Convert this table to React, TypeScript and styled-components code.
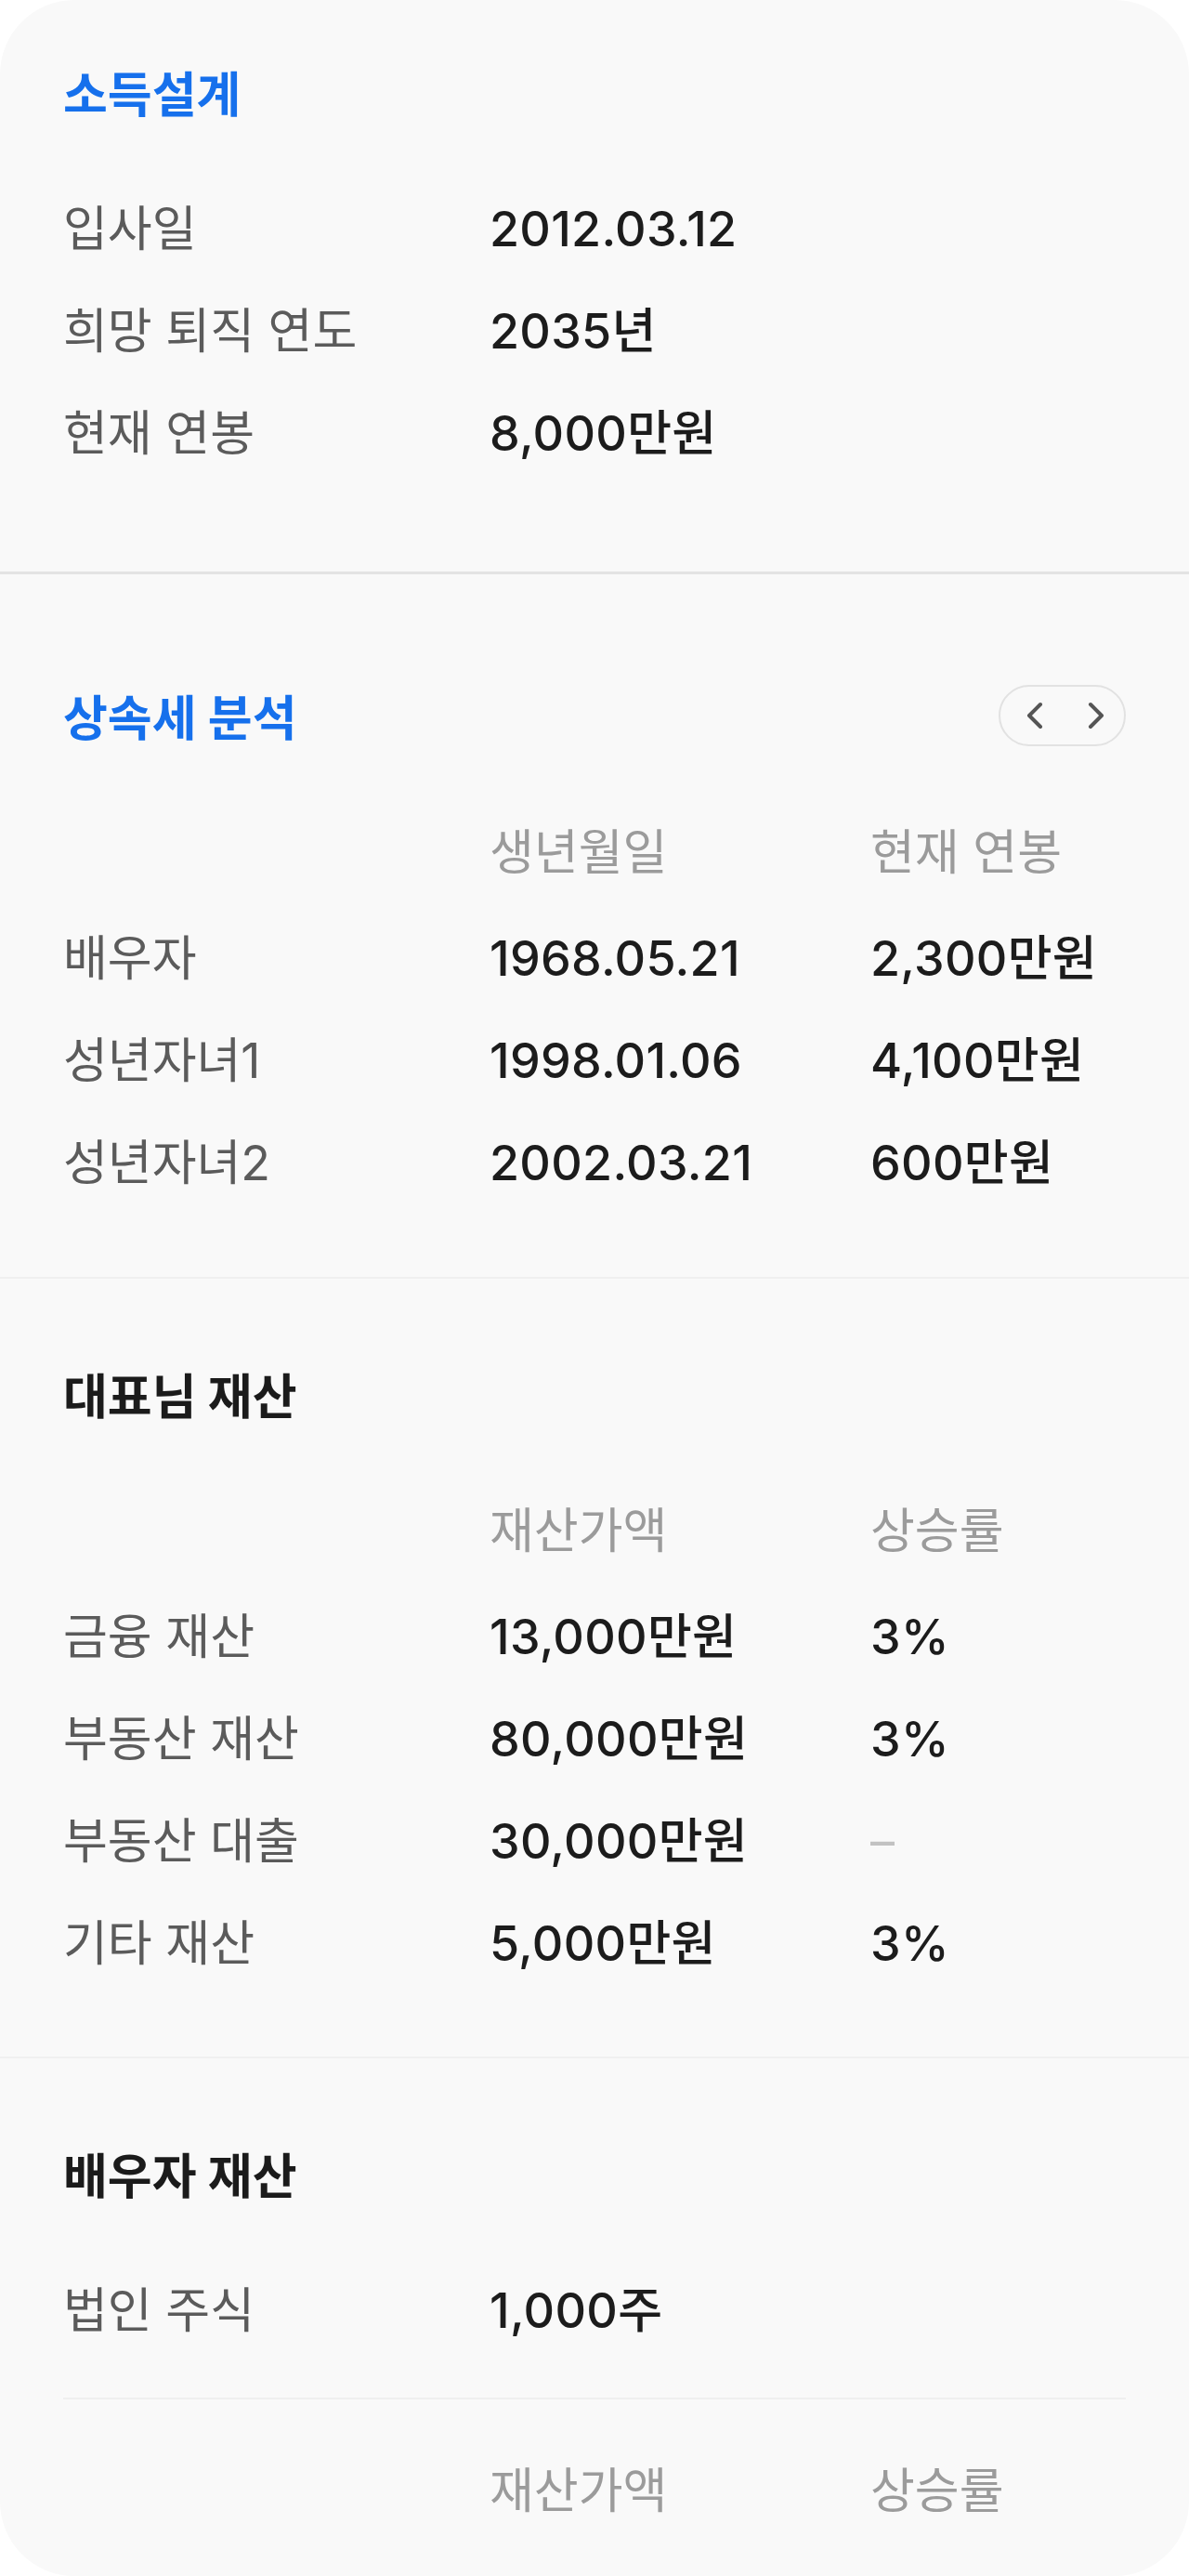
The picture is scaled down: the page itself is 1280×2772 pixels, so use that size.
import * as React from "react";
import styled, { createGlobalStyle } from "styled-components";

const GlobalStyle = createGlobalStyle`
  html, body {
    margin: 0;
    padding: 0;
    background: #ffffff;
  }
  body {
    font-family: "Inter", "Noto Sans CJK KR", sans-serif;
    -webkit-font-smoothing: antialiased;
  }
`;

const SCard = styled.div`
  width: 1280px;
  height: 2772px;
  background: #f9f9f9;
  border-radius: 80px;
  overflow: hidden;
  display: flex;
  flex-direction: column;
`;

const SSection = styled.section<{ $top: number; $bottom?: number; $thick?: boolean; $last?: boolean }>`
  padding: ${p => p.$top}px 68px ${p => p.$bottom || 0}px;
  border-bottom: ${p => (p.$last ? "none" : p.$thick ? "3px solid #e3e3e3" : "2px solid #f0f0f0")};
`;

const STitleRow = styled.div`
  display: flex;
  align-items: center;
  justify-content: space-between;
  height: 66px;
  margin-bottom: 56px;
`;

const STitle = styled.h2<{ $accent?: boolean }>`
  margin: 0;
  font-size: 52px;
  font-weight: 700;
  line-height: 66px;
  color: ${p => (p.$accent ? "#1670ec" : "#1b1b1b")};
`;

const SNav = styled.div`
  display: flex;
  align-items: center;
  justify-content: space-between;
  box-sizing: border-box;
  width: 137px;
  height: 66px;
  padding: 0 19px 0 26px;
  border: 2px solid #e2e2e2;
  border-radius: 33px;
  margin-top: -8px;
`;

const SArrow = styled.svg`
  width: 22px;
  height: 32px;
  display: block;
`;

const STable = styled.div`
  display: grid;
  grid-template-columns: 459px 410px 1fr;
`;

const SHead = styled.div<{ $after?: number }>`
  grid-column: 1 / -1;
  display: grid;
  grid-template-columns: subgrid;
  margin-bottom: ${p => (p.$after !== undefined ? p.$after : 4)}px;
`;

const SRow = styled.div`
  grid-column: 1 / -1;
  display: grid;
  grid-template-columns: subgrid;
`;

const SCell = styled.div<{ $kind: "label" | "value" | "head" | "muted" }>`
  height: 110px;
  line-height: 110px;
  font-size: 52px;
  white-space: nowrap;
  letter-spacing: ${p => (p.$kind === "value" ? "0.3px" : "0")};
  font-weight: ${p => (p.$kind === "value" ? 500 : 400)};
  color: ${p =>
    p.$kind === "value" ? "#1c1c1c" : p.$kind === "head" ? "#9b9b9b" : p.$kind === "muted" ? "#c2c2c2" : "#5b5b5b"};
`;

const SInnerLine = styled.div`
  height: 2px;
  background: #efefef;
  margin: 38px 0 44px;
`;

const ChevronLeft = () => (
  <SArrow viewBox="0 0 22 32">
    <polyline points="17,4 5,16 17,28" fill="none" stroke="#555555" strokeWidth="4" strokeLinecap="round" strokeLinejoin="round" />
  </SArrow>
);

const ChevronRight = () => (
  <SArrow viewBox="0 0 22 32">
    <polyline points="5,4 17,16 5,28" fill="none" stroke="#555555" strokeWidth="4" strokeLinecap="round" strokeLinejoin="round" />
  </SArrow>
);

type Row = [string, string, string?];

const income: Row[] = [
  ["입사일", "2012.03.12"],
  ["희망 퇴직 연도", "2035년"],
  ["현재 연봉", "8,000만원"],
];

const family: Row[] = [
  ["배우자", "1968.05.21", "2,300만원"],
  ["성년자녀1", "1998.01.06", "4,100만원"],
  ["성년자녀2", "2002.03.21", "600만원"],
];

const ceoAssets: Row[] = [
  ["금융 재산", "13,000만원", "3%"],
  ["부동산 재산", "80,000만원", "3%"],
  ["부동산 대출", "30,000만원", "-"],
  ["기타 재산", "5,000만원", "3%"],
];

// continues below the fold, only its top edge shows
const spouseAssets: Row[] = [["금융 재산", "1,000만원", "-"]];

const Rows = ({ rows }: { rows: Row[] }) => (
  <>
    {rows.map(([label, value, extra]) => (
      <SRow key={label}>
        <SCell $kind="label">{label}</SCell>
        <SCell $kind="value">{value}</SCell>
        {extra !== undefined && <SCell $kind={extra === "-" ? "muted" : "value"}>{extra === "-" ? "–" : extra}</SCell>}
      </SRow>
    ))}
  </>
);

const Head = ({ cols, after }: { cols: [string, string]; after?: number }) => (
  <SHead $after={after}>
    <SCell $kind="head" />
    <SCell $kind="head">{cols[0]}</SCell>
    <SCell $kind="head">{cols[1]}</SCell>
  </SHead>
);

const App = () => (
  <>
    <GlobalStyle />
    <SCard>
      <SSection $top={70} $bottom={93} $thick>
        <STitleRow>
          <STitle $accent>소득설계</STitle>
        </STitleRow>
        <STable>
          <Rows rows={income} />
        </STable>
      </SSection>

      <SSection $top={123} $bottom={67}>
        <STitleRow>
          <STitle $accent>상속세 분석</STitle>
          <SNav>
            <ChevronLeft />
            <ChevronRight />
          </SNav>
        </STitleRow>
        <STable>
          <Head cols={["생년월일", "현재 연봉"]} />
          <Rows rows={family} />
        </STable>
      </SSection>

      <SSection $top={95} $bottom={66}>
        <STitleRow>
          <STitle>대표님 재산</STitle>
        </STitleRow>
        <STable>
          <Head cols={["재산가액", "상승률"]} />
          <Rows rows={ceoAssets} />
        </STable>
      </SSection>

      <SSection $top={95} $last>
        <STitleRow>
          <STitle>배우자 재산</STitle>
        </STitleRow>
        <STable>
          <Rows rows={[["법인 주식", "1,000주"]]} />
        </STable>
        <SInnerLine />
        <STable>
          <Head cols={["재산가액", "상승률"]} after={16} />
          <Rows rows={spouseAssets} />
        </STable>
      </SSection>
    </SCard>
  </>
);

export default App;
